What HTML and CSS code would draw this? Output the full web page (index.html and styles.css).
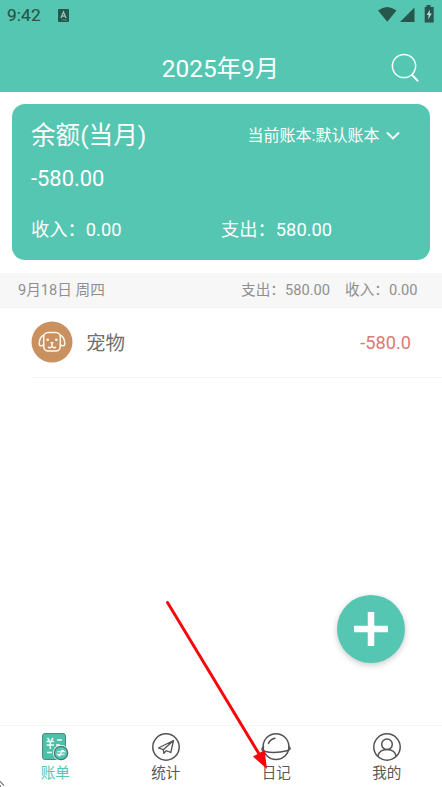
FILE: index.html
```html
<!DOCTYPE html>
<html lang="zh-CN">
<head>
<meta charset="utf-8">
<title>账单</title>
<link rel="stylesheet" href="styles.css">
</head>
<body>
<div class="app">
  <header class="header">
    <div class="status">
      <span class="clock">9:42</span>
      <svg class="keyboard" width="11" height="13" viewBox="0 0 11 13"><rect width="11" height="13" rx="1" fill="#26564c"/><path d="M3 9 5.500 3 8 9M3.800 7.200h3.400" fill="none" stroke="#8fcabd" stroke-width="1.300"/><path d="M4 11h5" stroke="#68a599" stroke-width=".7"/></svg>
      <svg class="signals" width="57" height="18" viewBox="0 0 57 18" fill="#26564c"><path d="M0 5.500Q9.200 -1.500 18.500 5.500L9.300 16.800Z"/><path d="M22 17 36.500 2.500V17Z"/><path d="M48.500 0h4v2h3.200v15.500h-9V2h1.800z"/><path d="M52 4.500 48.700 10h2.100l-.9 4.800 3.900-6.400h-2.200z" fill="#b0e4d9"/></svg>
    </div>
    <div class="titlebar">
      <h1 class="title">2025年9月</h1>
      <svg class="search" width="30" height="32" viewBox="0 0 30 32" fill="none" stroke="#f4fffc"><circle cx="14" cy="15" r="11.600" stroke-width="1.500"/><path d="m21.700 23.500 6.400 6.700" stroke-width="2"/></svg>
    </div>
  </header>
  <main class="main">
    <section class="card">
      <div class="card-top">
        <h2 class="card-title">余额(当月)</h2>
        <div class="book">当前账本:默认账本<svg class="chevron" width="14" height="10" viewBox="0 0 14 10"><path d="m1 1.500 6 6 6-6" fill="none" stroke="#fff" stroke-width="1.900"/></svg></div>
      </div>
      <div class="balance">-580.00</div>
      <div class="totals"><span>收入：0.00</span><span>支出：580.00</span></div>
    </section>
    <div class="day">
      <span class="date">9月18日 周四</span>
      <span>支出：580.00</span>
      <span class="day-income">收入：0.00</span>
    </div>
    <div class="entry">
      <svg class="pet" width="42" height="42" viewBox="0 0 42 42"><circle cx="21" cy="21" r="20.500" fill="#c99160"/><g fill="none" stroke="#fff8ef" stroke-width="1.500" stroke-linecap="round"><rect x="12.700" y="11.500" width="16.600" height="18.600" rx="4.500"/><path d="M12.700 14.300C10 15 8.500 19 8.200 22.500c-.2 2.400 2.800 3.300 4.500.8M29.300 14.300c2.700.7 4.200 4.700 4.500 8.200.2 2.400-2.800 3.300-4.500.8M21 22.500V25m-3.500 1.300c1.200.8 2.700.3 3.500-1.300.8 1.600 2.300 2.100 3.500 1.300"/></g><g fill="#fff8ef"><circle cx="16.700" cy="18.700" r="1.300"/><circle cx="25.300" cy="18.700" r="1.300"/><path d="M19 21h4l-2 2.500z"/></g></svg>
      <span class="category">宠物</span>
      <span class="amount">-580.0</span>
    </div>
  </main>
  <nav class="tabs">
    <a class="tab active"><svg width="30" height="30" viewBox="0 0 30 30"><rect x="2.500" y="1.500" width="23" height="26" rx="2.500" fill="#50bfa9" stroke="#448d7e"/><path d="m7.500 6 1.800 2.500M13 6l-1.800 2.500M6.500 9.500h7.500M6.500 13h7.500M10.200 8.500V17M17 8h5M7 20.500h5M16 13h4" stroke="#e9fff9" stroke-width="1.400" fill="none"/><circle cx="21" cy="21" r="8" fill="#fff"/><circle cx="21" cy="21" r="6.700" fill="#55c5b0" stroke="#47796f" stroke-width="1.200"/><path d="M17.500 19.800h7l-2.200-1.800M24.500 22.300h-7l2.200 1.800M22 18l-2 6" fill="none" stroke="#fff" stroke-width="1.100"/></svg><span>账单</span></a>
    <a class="tab"><svg width="30" height="30" viewBox="0 0 30 30" fill="none" stroke="#535353" stroke-width="1.500" stroke-linejoin="round"><circle cx="15" cy="15" r="13.200"/><path d="M22.500 8.500 7.500 16l4.800 1.700ZM22.500 8.500l-2.700 12-4.600-1.800M22.500 8.500l-10.200 9.200.6 3.600 2.300-2.600" stroke-width="1.300"/></svg><span>统计</span></a>
    <a class="tab"><svg width="30" height="30" viewBox="0 0 30 30" fill="none" stroke="#535353" stroke-width="1.500" stroke-linecap="round"><circle cx="15" cy="14.700" r="12.900"/><path d="M2.500 14.800C-.2 17 .8 18.700 4 19.500c6.500 1.500 14.500 1.200 22-.8 3.500-1 4-2.300 1.700-4M7.500 11.500c1-2.500 3.300-4.500 6.300-5.200"/></svg><span>日记</span></a>
    <a class="tab"><svg width="30" height="30" viewBox="0 0 30 30" fill="none" stroke="#535353" stroke-width="1.500"><circle cx="15" cy="15" r="13.200"/><circle cx="15" cy="12.300" r="5.300"/><path d="M5.800 24.500c.9-4.800 4.300-7 9.200-7s8.300 2.200 9.200 7"/></svg><span>我的</span></a>
  </nav>
  <button class="add" aria-label="添加"><svg width="34" height="34" viewBox="0 0 34 34"><path d="M17 0v34M0 17h34" stroke="#fff" stroke-width="6.500"/></svg></button>
  <svg class="arrow" width="110" height="176" viewBox="160 596 110 176"><path d="m167.500 602.500 92.500 153" stroke="#fb0309" stroke-width="2.900" stroke-linecap="round"/><path d="m267 769-14-12.500 11.500-6.500z" fill="#fb0309"/></svg>
  <svg class="cursor" width="5" height="6" viewBox="0 0 5 6"><path d="M0 1h1M1 2h1M2 3h1M3 4h1M0 5h1" stroke="#222" stroke-width="1.200"/></svg>
</div>
</body>
</html>
```
FILE: styles.css
```css
* { box-sizing: border-box; }
body {
  margin: 0;
  font-family: Roboto, "Noto Sans CJK SC", sans-serif;
  background: #fff;
}
svg { display: block; flex: none; }
h1, h2 { margin: 0; font-weight: 400; }
.app {
  position: relative;
  display: flex;
  flex-direction: column;
  width: 442px;
  height: 787px;
  overflow: hidden;
}
.header { height: 92px; background: #55c6b2; color: #fff; }
.status {
  display: flex;
  align-items: center;
  height: 30px;
  padding: 0 7px;
  color: #26564c;
}
.clock { width: 51px; font-size: 17.300px; line-height: 30px; letter-spacing: .1px; -webkit-text-stroke: .2px; }
.signals { margin: -2px 0 0 auto; }
.titlebar {
  display: grid;
  grid-template-columns: 1fr auto 1fr;
  align-items: center;
  height: 62px;
  padding: 0 21px 0 20px;
}
.title { grid-column: 2; font-size: 24.400px; line-height: 36px; padding-top: 15px; }
.search { justify-self: end; margin: 12px 1px 0 0; }
.main { flex: 1; }
.card {
  height: 156px;
  margin: 12px 12px 13px;
  padding: 14px 30.500px 0 19px;
  border-radius: 13px;
  background: #55c6b2;
  color: #fff;
}
.card-top { display: flex; align-items: center; justify-content: space-between; height: 36px; }
.card-title { font-size: 24.600px; line-height: 36px; }
.book { display: flex; align-items: center; gap: 6px; margin-top: -1px; font-size: 16px; line-height: 24px; }
.balance { height: 30px; margin-top: 10px; font-size: 21.900px; line-height: 30px; }
.totals { display: grid; grid-template-columns: 190px 1fr; margin-top: 22px; font-size: 18.300px; line-height: 28px; }
.day {
  display: flex;
  align-items: center;
  height: 35px;
  padding: 0 24.500px 0 18px;
  border-bottom: 1px solid #f0f0f0;
  background: #f7f7f7;
  color: #8f8f8f;
  font-size: 14.650px;
  line-height: 34px;
}
.date { margin-right: auto; }
.day-income { margin-left: 15px; }
.entry {
  display: flex;
  align-items: center;
  height: 70px;
  margin-left: 31px;
  padding-right: 31px;
  border-bottom: 1px solid #f5f5f5;
}
.pet { margin-top: -1px; }
.category { margin-left: 13px; padding-top: 2px; color: #707070; font-size: 19.500px; line-height: 30px; }
.amount { margin-left: auto; color: #db7a75; font-size: 18.200px; }
.tabs {
  display: grid;
  grid-template-columns: repeat(4, 1fr);
  height: 62px;
  border-top: 1px solid #f4f4f4;
}
.tab {
  display: flex;
  flex-direction: column;
  align-items: center;
  padding-top: 6px;
  color: #585858;
  font-size: 14.600px;
  line-height: 23px;
}
.active { color: #55c6b2; }
.add {
  position: absolute;
  left: 337px;
  top: 595px;
  display: grid;
  place-items: center;
  width: 68px;
  height: 68px;
  border: 0;
  border-radius: 50%;
  padding: 0;
  background: #55c6b2;
  box-shadow: 0 2px 6px rgba(0, 0, 0, .22);
}
.arrow { position: absolute; left: 160px; top: 596px; }
.cursor { position: absolute; left: 0; bottom: 0; }
```
